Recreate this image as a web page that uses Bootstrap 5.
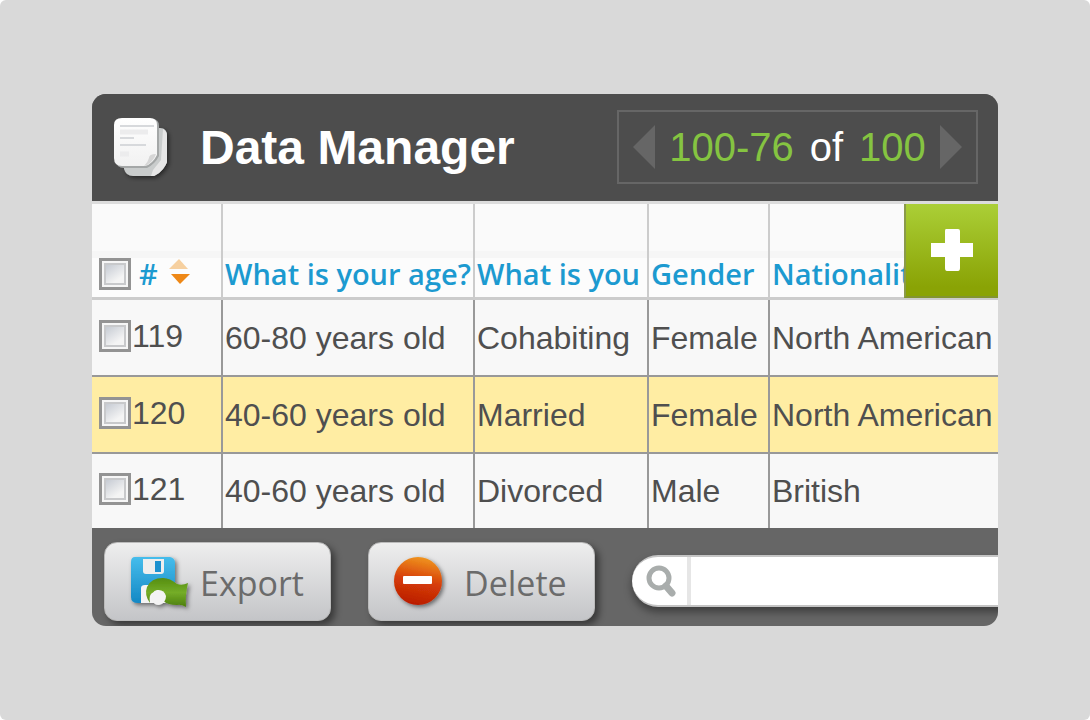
<!DOCTYPE html>
<html lang="en">
<head>
<meta charset="utf-8">
<meta name="viewport" content="width=device-width, initial-scale=1">
<title>Data Manager</title>
<link href="https://cdn.jsdelivr.net/npm/bootstrap@5.3.0/dist/css/bootstrap.min.css" rel="stylesheet">
<style>
  html { background: #fff; }
  body { background: #fff; font-family: "Liberation Sans", Arial, sans-serif; }
  .stage { background: #d9d9d9; border-radius: 6px; padding: 94px 92px; }
  .panel { border-radius: 14px; background: #666; }
  .panel-top { background: #4d4d4d; height: 107px; padding: 0 20px; }
  .panel-title { font-size: 48px; font-weight: 700; line-height: 48px; }
  .docs-icon { width: 64px; height: 68px; margin-right: 24px; }
  .pager { border: 2px solid #666; height: 74px; width: 361px; padding: 0 14px; font-size: 40px; line-height: 44px; margin-top: -2px; }
  .pager span { color: #85c441; }
  .pager button, .add-btn { border: 0; background: none; padding: 0; display: flex; align-items: center; justify-content: center; }

  .data-grid { table-layout: fixed; border-collapse: separate; border-spacing: 0; border-top: 3px solid #dcdcdc; margin: 0; font-size: 32px; line-height: 36px; color: #4f4f4f; }
  .col-id { width: 131px; }
  .col-age { width: 252px; }
  .col-status { width: 174px; }
  .col-gender { width: 121px; }
  .data-grid th, .data-grid td { padding: 0 2px; overflow: hidden; white-space: nowrap; border: 0 solid #999; border-right-width: 2px; border-bottom-width: 2px; background: #f8f8f8; }
  .data-grid th:last-child, .data-grid td:last-child { border-right-width: 0; }
  .data-grid th { height: 96px; vertical-align: bottom; padding-bottom: 5px; border-color: #ccc; border-bottom-width: 3px; font: 600 29px/36px "Open Sans", "Noto Sans", sans-serif; color: #1c9ad0; background: linear-gradient(#fafafa 47px, #f6f6f6 47px, #f6f6f6 54px, #fcfcfc 54px); }
  .data-grid td { height: 77px; }
  .data-grid tr:last-child td { height: 74px; border-bottom-width: 0; }
  .data-grid .picked td { background: #ffeda3; }
  .data-grid .id-cell { padding-left: 7px; }
  .data-grid td label { margin-bottom: 4px; gap: 1px; }
  .tick { appearance: none; margin: 0; width: 32px; height: 32px; flex: none; border: 3px solid #939393; background: linear-gradient(145deg, #c6cbd3, #f4f4f4 75%) center / 18px 18px no-repeat, linear-gradient(#c8c9cb, #c8c9cb) center / 22px 22px no-repeat, #f6f6f6; }
  .tick:checked { background: #1c9ad0; }
  .sort-link { color: inherit; text-decoration: none; gap: 10px; }
  .add-btn { top: 3px; right: 0; width: 94px; height: 94px; background: linear-gradient(#abcf37, #8aa305 90%); border-left: 2px solid #8a9a4a; border-bottom: 2px solid #83952f; }

  .panel-foot { height: 98px; padding: 14px 0 6px 12px; gap: 37px; }
  .tool-btn { height: 79px; width: 227px; padding: 2px 24px 0; border: 1px solid #bbb; border-radius: 13px; background: linear-gradient(#eee, #c4c5c8); box-shadow: 4px 4px 7px rgba(0,0,0,.45); color: #6b6b6b; font: 400 34px/40px "Open Sans", "Noto Sans", sans-serif; }
  .tool-btn svg { width: 60px; height: 56px; margin-right: 11px; flex: none; overflow: visible; }
  .search-box { height: 52px; margin-top: 13px; border: 2px solid #c4c4c4; border-width: 2px 0; border-radius: 26px 0 0 26px; background: #fff; box-shadow: 0 5px 8px rgba(0,0,0,.4); }
  .search-box label { width: 59px; height: 48px; border-right: 4px solid #e6e6e6; }
  .search-box input { border: 0; outline: 0; background: none; font-size: 30px; min-width: 0; padding: 0 10px; }
</style>
</head>
<body>
<main class="stage min-vh-100">
  <div class="panel overflow-hidden">
    <header class="panel-top d-flex align-items-center">
      <svg class="docs-icon" viewBox="0 0 64 68" aria-hidden="true">
        <defs>
          <linearGradient id="sheet" x2="0" y2="1"><stop stop-color="#fff"/><stop offset="1" stop-color="#f1f1f1"/></linearGradient>
          <filter id="soft" x="-20%" y="-20%" width="150%" height="150%"><feDropShadow dx="2" dy="2" stdDeviation="2" flood-opacity=".5"/></filter>
        </defs>
        <path d="M18 14h30q7 0 7 8v26q-1 3-4 7-4 5-9 7H21q-7 0-9-7V20q0-6 6-6z" fill="#c9cccc" filter="url(#soft)"/>
        <path d="M51 15q4 2 4 7v26q-1 3-4 7-4 5-9 7h-3l2-6 8-10z" fill="#e6e6e6"/>
        <path d="M10 5h30q7 0 7 7v30q-2 4-5 7-3 3-7 5H12q-8 0-8-8V11q0-6 6-6z" fill="#a4a7a7"/>
        <path d="M10 4h28q7 0 7 7v30q-2 4-5 7-3 3-7 4H10q-8 0-8-8V11q0-7 8-7z" fill="url(#sheet)"/>
        <path d="M44 40q-7 0-7 4-1 4-5 8 4-1 7-4 4-4 5-8z" fill="#d6d6d6"/>
        <path d="M8 12h34M8 24h14M8 31h26" stroke="#d7d9dc" stroke-width="2"/>
        <path d="M8 18h28M8 40h9" stroke="#ececed" stroke-width="5"/>
      </svg>
      <h1 class="panel-title text-white m-0">Data Manager</h1>
      <nav class="pager d-flex align-items-center justify-content-between ms-auto text-white" aria-label="Pages">
        <button type="button" aria-label="Previous page"><svg width="22" height="44"><path d="M22 0v44L0 22z" fill="#666"/></svg></button>
        <div class="d-flex gap-3 text-nowrap"><span>100-76</span>of<span>100</span></div>
        <button type="button" aria-label="Next page"><svg width="22" height="44"><path d="M0 0v44l22-22z" fill="#666"/></svg></button>
      </nav>
    </header>

    <div class="position-relative">
      <table class="data-grid w-100">
        <colgroup><col class="col-id"><col class="col-age"><col class="col-status"><col class="col-gender"><col></colgroup>
        <thead>
          <tr>
            <th class="id-cell" scope="col">
              <div class="d-flex align-items-center">
                <input class="tick" type="checkbox" aria-label="Select all rows">
                <a class="sort-link d-flex align-items-center ms-2" href="#"><span>#</span><svg width="22" height="30"><path d="M11 0l9 10H1z" fill="#f6d0a0"/><path d="M3 15h19l-10 10z" fill="#ee8817"/></svg></a>
              </div>
            </th>
            <th scope="col">What is your age?</th>
            <th scope="col">What is you</th>
            <th scope="col">Gender</th>
            <th scope="col">Nationality</th>
          </tr>
        </thead>
        <tbody>
          <tr>
            <td class="id-cell"><label class="d-flex align-items-center"><input class="tick" type="checkbox">119</label></td>
            <td>60-80 years old</td><td>Cohabiting</td><td>Female</td><td>North American</td>
          </tr>
          <tr class="picked">
            <td class="id-cell"><label class="d-flex align-items-center"><input class="tick" type="checkbox">120</label></td>
            <td>40-60 years old</td><td>Married</td><td>Female</td><td>North American</td>
          </tr>
          <tr>
            <td class="id-cell"><label class="d-flex align-items-center"><input class="tick" type="checkbox">121</label></td>
            <td>40-60 years old</td><td>Divorced</td><td>Male</td><td>British</td>
          </tr>
        </tbody>
      </table>
      <button class="add-btn position-absolute" type="button" aria-label="Add column"><svg width="42" height="42"><path d="M15 0h12q2 0 2 2v12h13v14H29v11q0 3-2 3H16q-2 0-2-3V28H0V14h14V2q0-2 1-2z" fill="#fff"/></svg></button>
    </div>

    <footer class="panel-foot d-flex align-items-start">
      <button class="tool-btn d-flex align-items-center flex-shrink-0" type="button">
        <svg viewBox="0 0 60 56" aria-hidden="true">
          <defs>
            <linearGradient id="disk" x2="0" y2="1"><stop stop-color="#46bdec"/><stop offset="1" stop-color="#1488c4"/></linearGradient>
            <linearGradient id="leaf" x2="0" y2="1"><stop stop-color="#558d10"/><stop offset=".5" stop-color="#74ad28"/><stop offset="1" stop-color="#4c7e0c"/></linearGradient>
          </defs>
          <g filter="url(#soft)">
            <path d="M6 2h35q5 1 5 6v34q0 6-5 6H9q-7 0-7-6V7q0-5 4-5z" fill="url(#disk)"/>
            <path d="M14 4h21v12q0 3-3 3H17q-3 0-3-3z" fill="#eee"/>
            <path d="M26 6h6v11h-6z" fill="#1a91cf"/>
            <path d="M12 48V33q0-3 4-3h24v18z" fill="#f4f4f4"/>
            <path d="M21 48q-6-8-3-16 4-9 16-9 7 0 14 6 5 2 11-1-3 12-2 24-5-3-9-2-9 0-14-4-1-9-7-9-8 0-6 11z" fill="url(#leaf)"/>
            <path d="M23 45q-1-9 5-10 7-1 9 6 0 7-7 9-5 0-7-5z" fill="#f3f3f3"/>
          </g>
        </svg>Export
      </button>
      <button class="tool-btn d-flex align-items-center flex-shrink-0" type="button">
        <svg viewBox="0 0 60 56" aria-hidden="true">
          <defs>
            <linearGradient id="stop" x1=".6" x2=".4" y2="1"><stop stop-color="#f0951f"/><stop offset=".5" stop-color="#d63d08"/><stop offset="1" stop-color="#b91c03"/></linearGradient>
          </defs>
          <circle cx="25" cy="26" r="24" fill="url(#stop)" filter="url(#soft)"/>
          <rect x="10" y="21" width="29" height="8" rx="1" fill="#fff"/>
        </svg>Delete
      </button>
      <div class="search-box d-flex flex-grow-1 align-items-center">
        <label class="d-flex align-items-center justify-content-center flex-shrink-0" for="find" aria-label="Search"><svg width="32" height="34"><circle cx="15" cy="14" r="10" fill="none" stroke="#a9adac" stroke-width="5"/><path d="M22 22l6 7" stroke="#a9adac" stroke-width="7" stroke-linecap="round"/></svg></label>
        <input class="flex-grow-1" id="find" type="text">
      </div>
    </footer>
  </div>
</main>
<script src="https://cdn.jsdelivr.net/npm/bootstrap@5.3.0/dist/js/bootstrap.bundle.min.js"></script>
</body>
</html>
